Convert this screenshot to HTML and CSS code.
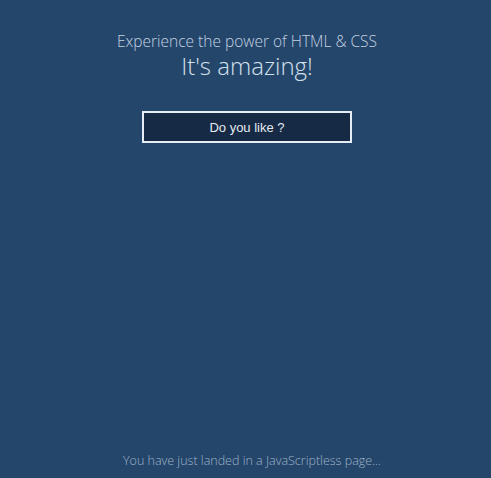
FILE: index.html
```html
<!DOCTYPE html>
<html>
<head>
<meta charset="utf-8">
<link rel="stylesheet" href="styles.css">
</head>
<body>
<div class="page">
  <header class="hero">
    <p class="subtitle">Experience the power of HTML &amp; CSS</p>
    <h1 class="title">It's amazing!</h1>
    <button class="btn">Do you like ?</button>
  </header>
  <footer class="footer">You have just landed in a JavaScriptless page...</footer>
</div>
</body>
</html>
```
FILE: styles.css
```css
html, body { margin: 0; padding: 0; height: 100%; }
body { background: #25466b; font-family: "Open Sans", "Noto Sans", sans-serif; color: #c9d6e4; }
.page { min-height: 100vh; display: flex; flex-direction: column; align-items: center; box-sizing: border-box; padding-left: 3px; }
.hero { display: flex; flex-direction: column; align-items: center; padding-top: 31px; flex: 1; }
.subtitle { margin: 0; font-size: 15.5px; font-weight: 300; line-height: 21px; color: #c3d1e1; }
.title { margin: 0; font-size: 24px; font-weight: 300; line-height: 28px; color: #d4e0ec; }
.btn { margin-top: 31px; width: 210px; height: 32px; background: #172a45; border: 2px solid #e6edf5; color: #e3e9f0; font-family: "Liberation Sans", Arial, sans-serif; font-size: 13px; padding: 0; }
.footer { font-size: 12.5px; font-weight: 300; color: #9fb2c8; padding-bottom: 8px; line-height: 18px; margin-left: 10px; }
```
